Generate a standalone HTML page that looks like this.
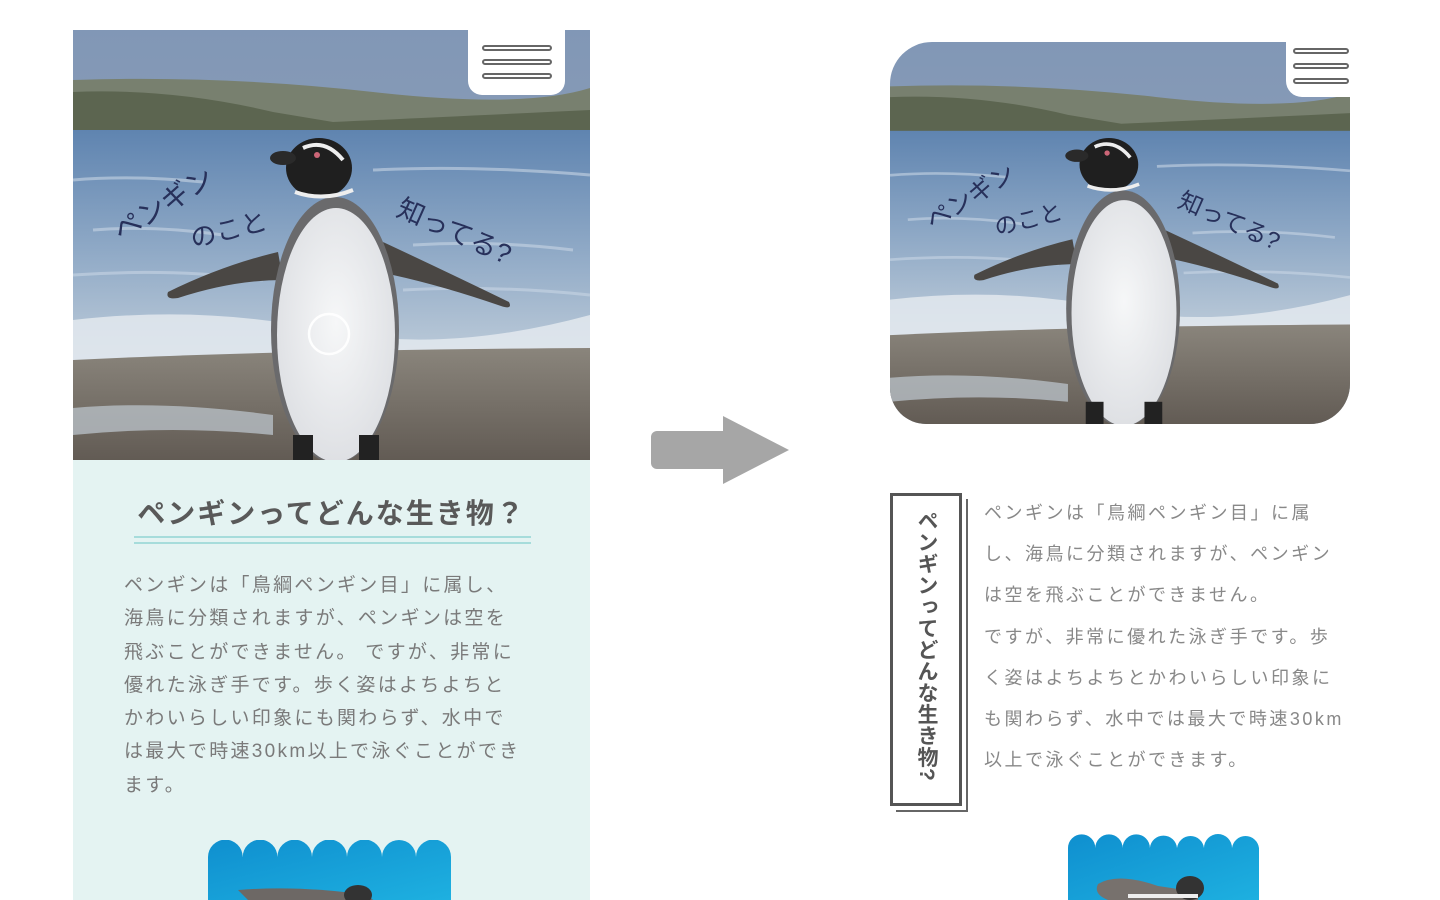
<!DOCTYPE html>
<html><head><meta charset="utf-8">
<style>
*{margin:0;padding:0;box-sizing:border-box}
body{width:1440px;height:900px;background:#fff;position:relative;overflow:hidden;font-family:"Liberation Sans","Noto Sans CJK JP",sans-serif}
.abs{position:absolute}
.photo{position:absolute;overflow:hidden}
.photo svg{display:block;width:100%;height:100%}
.menu{position:absolute;background:#fff}
.menu i{position:absolute;height:6px;border:2px solid #666;border-radius:4px;background:#fff}
.panel{left:73px;top:460px;width:517px;height:440px;background:#e4f3f2}
h2{position:absolute;left:73px;width:517px;top:492px;text-align:center;font-size:28px;font-weight:bold;color:#595959;letter-spacing:2px}
.ul{position:absolute;left:134px;width:397px;height:2px;background:#a6dcdb}
.ltext{position:absolute;left:124px;top:569px;width:420px;font-size:19px;line-height:33.3px;color:#7a7a7a;letter-spacing:2.3px;white-space:nowrap}
.rtext{position:absolute;left:984px;top:493px;width:380px;font-size:18px;line-height:41.2px;color:#888;letter-spacing:2.5px;white-space:nowrap}
.vbox{position:absolute;left:890px;top:493px;width:72px;height:313px;border:3px solid #555;box-shadow:5px 5px 0 -1px #fff,6px 6px 0 0 #666}
.vt{position:absolute;left:0;right:0;top:14px;writing-mode:vertical-rl;margin:0 auto;font-size:21px;font-weight:bold;color:#555;letter-spacing:0.5px;line-height:66px;text-align:left}
</style></head><body>

<div class="photo" style="left:73px;top:30px;width:517px;height:430px">
<svg viewBox="0 0 517 430" preserveAspectRatio="none">
<defs>
<linearGradient id="sky" x1="0" y1="0" x2="0" y2="1"><stop offset="0" stop-color="#8197b6"/><stop offset="1" stop-color="#9aa6b6"/></linearGradient>
<linearGradient id="wat" x1="0" y1="0" x2="0" y2="1"><stop offset="0" stop-color="#5f84b0"/><stop offset=".5" stop-color="#8fa9c6"/><stop offset="1" stop-color="#c2cfdb"/></linearGradient>
<linearGradient id="bch" x1="0" y1="0" x2="0" y2="1"><stop offset="0" stop-color="#8a857c"/><stop offset="1" stop-color="#625b54"/></linearGradient>
<radialGradient id="bel" cx=".5" cy=".45" r=".6"><stop offset="0" stop-color="#f6f7f8"/><stop offset="1" stop-color="#dcdee2"/></radialGradient>
</defs>
<rect width="517" height="430" fill="url(#sky)"/>
<path d="M0 50 Q150 45 300 62 T517 58 L517 105 L0 105Z" fill="#78806f"/>
<path d="M0 62 Q100 58 200 82 L260 92 Q350 88 517 80 L517 102 L0 102Z" fill="#5c6550"/>
<rect y="100" width="517" height="240" fill="url(#wat)"/>
<g stroke="#c8d6e4" stroke-width="3" opacity=".6" fill="none">
<path d="M0 150 Q60 145 130 152 M300 140 Q400 135 517 145 M20 200 Q80 195 150 205 M340 215 Q420 210 500 220 M0 245 Q100 238 190 250 M330 260 Q420 255 517 265"/>
</g>
<path d="M0 290 Q130 275 250 300 T517 285 L517 330 L0 345Z" fill="#e3e9ee" opacity=".85"/>
<path d="M0 330 Q200 320 517 318 L517 430 L0 430Z" fill="url(#bch)"/>
<path d="M0 378 Q90 370 200 385 L200 405 Q100 395 0 405Z" fill="#b6bec4" opacity=".8"/>
<path d="M205 222 Q150 235 95 262 Q92 270 105 268 Q160 250 210 250Z" fill="#4a4744"/>
<path d="M310 212 Q370 240 436 272 Q440 280 428 276 Q370 256 320 245Z" fill="#4a4744"/>
<ellipse cx="262" cy="300" rx="64" ry="133" fill="#6a6a6c"/>
<ellipse cx="263" cy="305" rx="59" ry="127" fill="url(#bel)"/>
<rect x="220" y="405" width="20" height="25" fill="#222"/><rect x="286" y="405" width="20" height="25" fill="#222"/>
<ellipse cx="246" cy="138" rx="33" ry="30" fill="#1f1f1f"/>
<path d="M230 118 Q252 108 270 130" stroke="#eee" stroke-width="4" fill="none"/>
<path d="M222 162 Q250 172 280 160" stroke="#eee" stroke-width="4" fill="none"/>
<ellipse cx="210" cy="128" rx="13" ry="7" fill="#2a2a2a"/>
<circle cx="244" cy="125" r="3" fill="#c67"/>
<circle cx="256" cy="304" r="20" fill="none" stroke="#fff" stroke-width="2.5" opacity=".9"/>
<g font-family="Liberation Sans,Noto Sans CJK JP,sans-serif" fill="#27305a">
<text x="48" y="212" font-size="28" transform="rotate(-32 48 212)">ペンギン</text>
<text x="120" y="218" font-size="26" transform="rotate(-14 120 218)">のこと</text>
<text x="322" y="185" font-size="27" transform="rotate(24 322 185)">知ってる?</text>
</g>
</svg>
<div class="menu" style="left:395px;top:0;width:97px;height:65px;border-radius:0 0 14px 14px">
<i style="left:14px;top:15px;width:70px"></i><i style="left:14px;top:29px;width:70px"></i><i style="left:14px;top:43px;width:70px"></i>
</div>
</div>

<div class="abs" style="left:651px;top:431px;width:80px;height:38px;background:#a6a6a6;border-radius:6px"></div>
<div class="abs" style="left:723px;top:416px;width:0;height:0;border-top:34px solid transparent;border-bottom:34px solid transparent;border-left:66px solid #a6a6a6"></div>

<div class="photo" style="left:890px;top:42px;width:460px;height:382px;border-radius:42px 0 40px 36px">
<svg viewBox="0 0 517 430" preserveAspectRatio="none">
<rect width="517" height="430" fill="url(#sky)"/>
<path d="M0 50 Q150 45 300 62 T517 58 L517 105 L0 105Z" fill="#78806f"/>
<path d="M0 62 Q100 58 200 82 L260 92 Q350 88 517 80 L517 102 L0 102Z" fill="#5c6550"/>
<rect y="100" width="517" height="240" fill="url(#wat)"/>
<g stroke="#c8d6e4" stroke-width="3" opacity=".6" fill="none">
<path d="M0 150 Q60 145 130 152 M300 140 Q400 135 517 145 M20 200 Q80 195 150 205 M340 215 Q420 210 500 220 M0 245 Q100 238 190 250 M330 260 Q420 255 517 265"/>
</g>
<path d="M0 290 Q130 275 250 300 T517 285 L517 330 L0 345Z" fill="#e3e9ee" opacity=".85"/>
<path d="M0 330 Q200 320 517 318 L517 430 L0 430Z" fill="url(#bch)"/>
<path d="M0 378 Q90 370 200 385 L200 405 Q100 395 0 405Z" fill="#b6bec4" opacity=".8"/>
<path d="M205 222 Q150 235 95 262 Q92 270 105 268 Q160 250 210 250Z" fill="#4a4744"/>
<path d="M310 212 Q370 240 436 272 Q440 280 428 276 Q370 256 320 245Z" fill="#4a4744"/>
<ellipse cx="262" cy="300" rx="64" ry="133" fill="#6a6a6c"/>
<ellipse cx="263" cy="305" rx="59" ry="127" fill="url(#bel)"/>
<rect x="220" y="405" width="20" height="25" fill="#222"/><rect x="286" y="405" width="20" height="25" fill="#222"/>
<ellipse cx="246" cy="138" rx="33" ry="30" fill="#1f1f1f"/>
<path d="M230 118 Q252 108 270 130" stroke="#eee" stroke-width="4" fill="none"/>
<path d="M222 162 Q250 172 280 160" stroke="#eee" stroke-width="4" fill="none"/>
<ellipse cx="210" cy="128" rx="13" ry="7" fill="#2a2a2a"/>
<circle cx="244" cy="125" r="3" fill="#c67"/>
<g font-family="Liberation Sans,Noto Sans CJK JP,sans-serif" fill="#27305a">
<text x="48" y="212" font-size="28" transform="rotate(-32 48 212)">ペンギン</text>
<text x="120" y="218" font-size="26" transform="rotate(-14 120 218)">のこと</text>
<text x="322" y="185" font-size="27" transform="rotate(24 322 185)">知ってる?</text>
</g>
</svg>
<div class="menu" style="left:396px;top:0;width:64px;height:55px;border-radius:0 0 0 16px">
<i style="left:7px;top:6px;width:56px"></i><i style="left:7px;top:21px;width:56px"></i><i style="left:7px;top:36px;width:56px"></i>
</div>
</div>

<div class="abs panel"></div>
<h2>ペンギンってどんな生き物？</h2>
<div class="ul" style="top:536px"></div><div class="ul" style="top:542px"></div>
<div class="ltext">ペンギンは「鳥綱ペンギン目」に属し、<br>海鳥に分類されますが、ペンギンは空を<br>飛ぶことができません。 ですが、非常に<br>優れた泳ぎ手です。歩く姿はよちよちと<br>かわいらしい印象にも関わらず、水中で<br>は最大で時速30km以上で泳ぐことができ<br>ます。</div>

<svg class="abs" style="left:208px;top:840px" width="243" height="60" viewBox="0 0 243 60">
<defs><linearGradient id="pool" x1="0" y1="0" x2="1" y2="1"><stop offset="0" stop-color="#0f8fcf"/><stop offset="1" stop-color="#1eb0e0"/></linearGradient></defs>
<path d="M0 60 L0 17 A17 17 0 0 1 34.7 17 A17 17 0 0 1 69.4 17 A17 17 0 0 1 104 17 A17 17 0 0 1 139 17 A17 17 0 0 1 174 17 A17 17 0 0 1 208 17 A17 17 0 0 1 243 17 L243 60Z" fill="url(#pool)"/>
<path d="M30 50 Q90 45 160 55 L165 60 L40 60Z" fill="#6d6865"/>
<ellipse cx="150" cy="55" rx="14" ry="10" fill="#333"/>
</svg>
<svg class="abs" style="left:1068px;top:834px" width="191" height="66" viewBox="0 0 191 66">
<path d="M0 66 L0 14 A13.6 13.6 0 0 1 27.3 14 A13.6 13.6 0 0 1 54.6 14 A13.6 13.6 0 0 1 81.9 14 A13.6 13.6 0 0 1 109 14 A13.6 13.6 0 0 1 136 14 A13.6 13.6 0 0 1 164 14 A13.6 13.6 0 0 1 191 14 L191 66Z" fill="url(#pool)"/>
<path d="M30 50 Q50 38 90 52 L130 58 L130 66 L40 66 Q25 60 30 50Z" fill="#77716d"/>
<ellipse cx="122" cy="54" rx="14" ry="12" fill="#333"/>
<path d="M60 62 L130 62" stroke="#eee" stroke-width="4"/>
</svg>

<div class="vbox"><div class="vt">ペンギンってどんな生き物?</div></div>
<div class="rtext">ペンギンは「鳥綱ペンギン目」に属<br>し、海鳥に分類されますが、ペンギン<br>は空を飛ぶことができません。<br>ですが、非常に優れた泳ぎ手です。歩<br>く姿はよちよちとかわいらしい印象に<br>も関わらず、水中では最大で時速30km<br>以上で泳ぐことができます。</div>

</body></html>
